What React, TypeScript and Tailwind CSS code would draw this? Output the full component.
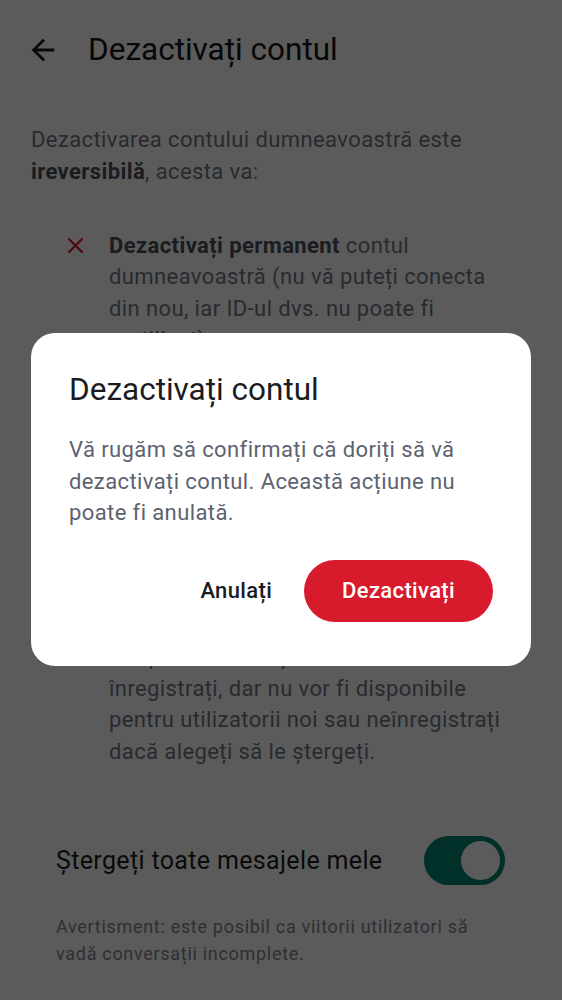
const FONT = { fontFamily: "Roboto, 'Noto Sans', sans-serif" };

// ── Icons ─────────────────────────────────────────────────────────────────────
function BackArrow() {
  return (
    <svg viewBox="0 0 24 24" className="size-[34px] shrink-0 fill-[#1a1a1a]">
      <path d="M20 11H7.83l5.59-5.59L12 4l-8 8 8 8 1.41-1.41L7.83 13H20v-2z" />
    </svg>
  );
}

function Cross() {
  return (
    <svg viewBox="0 0 24 24" className="mt-[2px] size-[27px] shrink-0 fill-[#d71a2c]">
      <path d="M19 6.41L17.59 5 12 10.59 6.41 5 5 6.41 10.59 12 5 17.59 6.41 19 12 13.41 17.59 19 19 17.59 13.41 12z" />
    </svg>
  );
}

// ── List item with red cross ─────────────────────────────────────────────────
function ConsequenceItem({ children }: { children: React.ReactNode }) {
  return (
    <li className="flex items-start gap-[20px]">
      <Cross />
      <p className="text-[22px] leading-[31.5px] tracking-[0.4px] text-[#717784]">{children}</p>
    </li>
  );
}

export default function App() {
  return (
    <div style={FONT} className="relative h-[1000px] w-[562px] overflow-hidden bg-white">
      {/* Page behind the dialog */}
      <header className="flex h-[100px] items-center gap-[28px] pl-[26px]">
        <BackArrow />
        <h1 className="text-[31.5px] font-normal text-[#141414]">Dezactivați contul</h1>
      </header>

      <main className="px-[31px] pt-[24px]">
        <p className="text-[22px] leading-[31.5px] tracking-[0.4px] text-[#717784]">
          Dezactivarea contului dumneavoastră este{" "}
          <span className="font-bold text-[#4a4f59]">ireversibilă</span>, acesta va:
        </p>

        <ul className="mt-[42.5px] flex flex-col gap-[32.5px] pl-[31px] pr-[26px]">
          <ConsequenceItem>
            <span className="font-bold text-[#4a4f59]">Dezactivați permanent</span> contul
            dumneavoastră (nu vă puteți conecta din nou, iar ID-ul dvs. nu poate fi
            reutilizat).
          </ConsequenceItem>
          <ConsequenceItem>
            <span className="font-bold text-[#4a4f59]">Eliminați</span> profilul, numele afișat
            <br />
            și avatarul din toate camerele.
          </ConsequenceItem>
          <ConsequenceItem>
            <span className="font-bold text-[#4a4f59]">Păstrați</span> mesajele trimise, care
            <br />
            rămân în istoricul camerelor în
            <br />
            care ați participat. Ele vor
            <br />
            continua să apară în arhiva
            <br />
            conversațiilor, ca parte din
            <br />
            conținutul vizibil pentru utilizatorii înregistrați, dar nu vor fi disponibile pentru
            utilizatorii noi sau neînregistrați dacă alegeți să le ștergeți.
          </ConsequenceItem>
        </ul>

        <div className="mt-[69px] flex items-center justify-between pl-[25px] pr-[26px]">
          <span className="text-[25px] tracking-[0.35px] text-[#1d1d1d]">
            Ștergeți toate mesajele mele
          </span>
          <div className="flex h-[49px] w-[81px] items-center justify-end rounded-full bg-[#00876f] pr-[5px]">
            <div className="size-[39px] rounded-full bg-white" />
          </div>
        </div>

        <p className="mt-[28px] pl-[25px] pr-[30px] text-[18px] leading-[27px] tracking-[0.7px] text-[#80858f]">
          Avertisment: este posibil ca viitorii utilizatori să vadă conversații incomplete.
        </p>
      </main>

      {/* Scrim */}
      <div className="absolute inset-0 bg-black/[0.643]" />

      {/* Dialog */}
      <div className="absolute left-[31px] top-[333px] w-[500px] rounded-[24px] bg-white px-[38px] pb-[44px] pt-[37px]">
        <h2 className="text-[31.5px] font-normal leading-[40px] text-[#1b1c1f]">
          Dezactivați contul
        </h2>
        <p className="mt-[24px] text-[22px] leading-[31.5px] tracking-[0.4px] text-[#5c6370]">
          Vă rugăm să confirmați că doriți să vă dezactivați contul. Această acțiune nu
          poate fi anulată.
        </p>
        <div className="mt-[31px] flex items-center justify-end gap-[16px]">
          <button className="px-[16px] text-[22px] font-medium tracking-[0.35px] text-[#1b1c1f]">
            Anulați
          </button>
          <button className="h-[62px] rounded-full bg-[#d71a2c] px-[38px] text-[22px] font-medium tracking-[0.35px] text-white">
            Dezactivați
          </button>
        </div>
      </div>
    </div>
  );
}
